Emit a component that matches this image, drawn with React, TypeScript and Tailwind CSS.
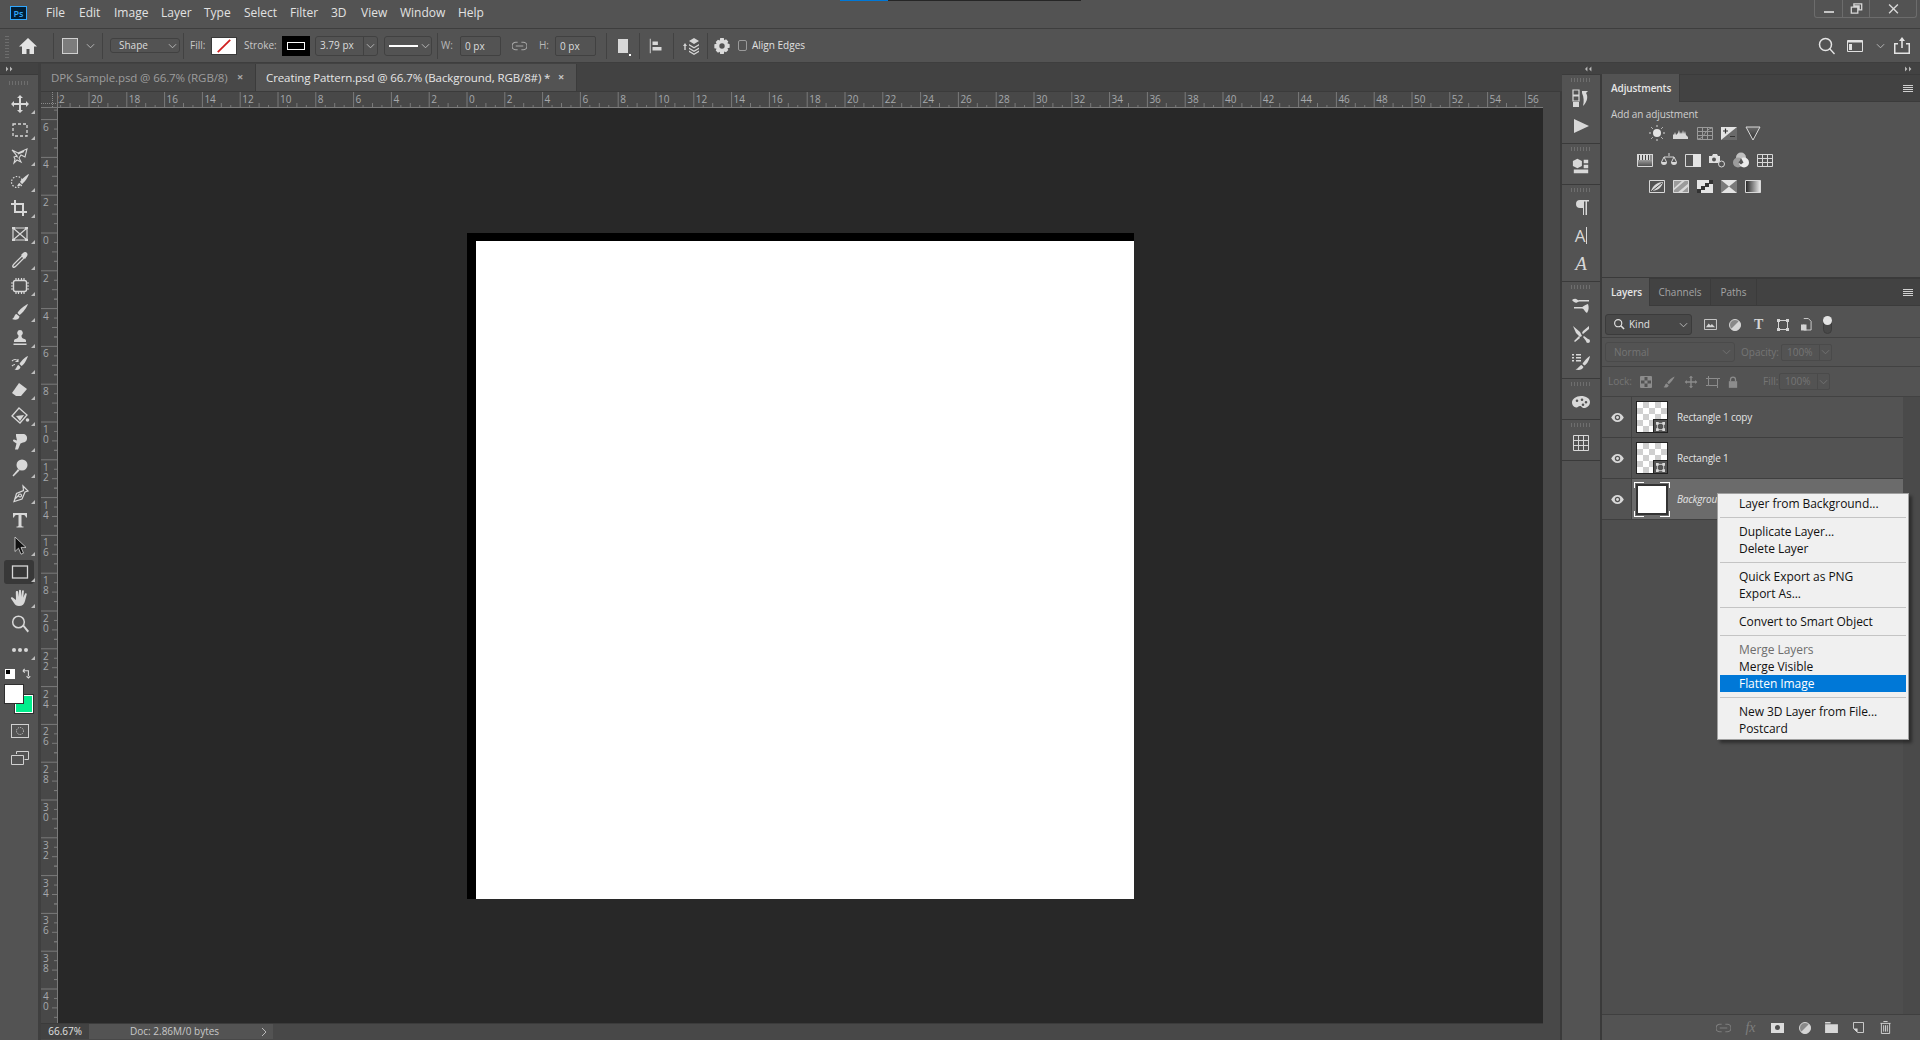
import type { ReactNode } from "react";

const UI_FONT = "font-['Open_Sans','Noto_Sans',sans-serif]";

type IconProps = { size?: number; className?: string; children: ReactNode };

function Ic({ size = 20, className = "text-[#d8d8d8]", children }: IconProps) {
  return (
    <svg viewBox="0 0 20 20" width={size} height={size} fill="currentColor" className={className}>
      {children}
    </svg>
  );
}

const line = { fill: "none", stroke: "currentColor", strokeWidth: 1.4 };

const MENUS = [
  ["File", "w-[33px]"],
  ["Edit", "w-[35px]"],
  ["Image", "w-[47px]"],
  ["Layer", "w-[43px]"],
  ["Type", "w-[40px]"],
  ["Select", "w-[46px]"],
  ["Filter", "w-[41px]"],
  ["3D", "w-[30px]"],
  ["View", "w-[39px]"],
  ["Window", "w-[58px]"],
  ["Help", "w-[40px]"],
];

function MenuBar() {
  return (
    <div className="relative flex h-[29px] shrink-0 items-center border-b border-[#3e3e3e] bg-[#535353] pb-[2px] text-[12px] text-[#e2e2e2]">
      <div className="ml-[10px] flex h-[14px] w-[17px] items-center justify-center border border-[#31a8ff] bg-[#001e36] text-[9px] font-semibold leading-none text-[#31a8ff]">
        Ps
      </div>
      <div className="ml-[19px] flex">
        {MENUS.map(([name, width]) => (
          <span key={name} className={width}>
            {name}
          </span>
        ))}
      </div>
      <div className="absolute left-[840px] top-0 flex h-px w-[241px] bg-[#262626]">
        <div className="h-px w-[48px] bg-[#0078d7]" />
      </div>
      <div className="absolute right-[3px] top-0 flex h-[18px] w-[103px] items-center rounded-b-[3px] border border-t-0 border-[#6c6c6c] text-[#d0d0d0]">
        <div className="flex h-full w-[28px] items-center justify-center border-r border-[#6c6c6c]">
          <div className="mt-[6px] h-[2px] w-[10px] bg-[#c4c4c4]" />
        </div>
        <div className="flex h-full w-[27px] items-center justify-center border-r border-[#6c6c6c]">
          <Ic size={13}>
            <path d="M2 8h10v9H2zM6 3h12v9h-4V6H6z" {...line} strokeWidth={2} />
          </Ic>
        </div>
        <div className="flex flex-1 items-center justify-center">
          <Ic size={13}>
            <path d="M4 3l6 6 6-6 1.500 1.500-6 6 6 6L16 18l-6-6-6 6-1.500-1.500 6-6-6-6z" />
          </Ic>
        </div>
      </div>
    </div>
  );
}

function Sep({ ml }: { ml: string }) {
  return <div className={`h-[26px] w-px bg-[#424242] ${ml}`} />;
}

function Chevron({ className = "" }: { className?: string }) {
  return (
    <svg viewBox="0 0 10 6" width="9" height="6" className={className}>
      <path d="M1 1l4 4 4-4" fill="none" stroke="#c0c0c0" strokeWidth="1" />
    </svg>
  );
}

function OptionsBar() {
  return (
    <div className="flex h-[34px] shrink-0 items-center border-b border-[#3e3e3e] bg-[#535353] text-[10px] text-[#cfcfcf]">
      <div className="ml-[5px] h-[24px] w-[4px] bg-[repeating-linear-gradient(0deg,#6d6d6d_0_1px,transparent_1px_3px)]" />
      <Ic size={20} className="ml-[9px] text-[#e4e4e4]">
        <path d="M10 2L1 10.500h3V18h4.500v-5h3v5H16v-7.500h3z" />
      </Ic>
      <Sep ml="ml-[15px]" />
      <div className="ml-[8px] h-[16px] w-[16px] border border-[#d0d0d0] bg-[#7c7c7c]" />
      <Chevron className="ml-[8px]" />
      <Sep ml="ml-[7px]" />
      <div className="ml-[7px] flex h-[15px] w-[70px] items-center rounded-[3px] border border-[#414141] pl-[8px] text-[#dcdcdc]">
        <span className="flex-1">Shape</span>
        <Chevron className="mr-[2px]" />
      </div>
      <Sep ml="ml-[3px]" />
      <span className="ml-[6px] w-[21px] text-[#c8c8c8]">Fill:</span>
      <div className="relative h-[18px] w-[26px] border border-[#3a3a3a] bg-white">
        <svg viewBox="0 0 26 18" className="absolute inset-0 h-full w-full">
          <path d="M6 16L20 2" stroke="#d02020" strokeWidth="2" />
        </svg>
      </div>
      <span className="ml-[7px] w-[38px] text-[#c8c8c8]">Stroke:</span>
      <div className="flex h-[20px] w-[28px] items-center justify-center bg-black">
        <div className="h-[8px] w-[18px] border border-white" />
      </div>
      <div className="ml-[5px] flex h-[20px] w-[63px] items-center rounded-[3px] border border-[#414141] pl-[4px] text-[#dcdcdc]">
        <span className="w-[43px]">3.79 px</span>
        <div className="flex h-full flex-1 items-center justify-center border-l border-[#414141]">
          <Chevron />
        </div>
      </div>
      <div className="ml-[6px] flex h-[20px] w-[48px] items-center gap-[3px] rounded-[3px] border border-[#414141] pl-[4px]">
        <div className="h-[2px] w-[29px] bg-white" />
        <Chevron />
      </div>
      <Sep ml="ml-[5px]" />
      <span className="ml-[3px] w-[19px] text-[#b8b8b8]">W:</span>
      <div className="h-[20px] w-[41px] rounded-[2px] border border-[#414141] pl-[4px] leading-[18px] text-[#dcdcdc]">0 px</div>
      <svg viewBox="0 0 16 10" width="15" height="10" className="ml-[11px] text-[#a8a8a8]">
        <path d="M6 1H4a4 4 0 000 8h2M10 1h2a4 4 0 010 8h-2M4 5h8" fill="none" stroke="currentColor" strokeWidth="1.200" />
      </svg>
      <span className="ml-[12px] w-[16px] text-[#b8b8b8]">H:</span>
      <div className="h-[20px] w-[41px] rounded-[2px] border border-[#414141] pl-[4px] leading-[18px] text-[#dcdcdc]">0 px</div>
      <Sep ml="ml-[10px]" />
      <div className="relative ml-[11px] h-[14px] w-[10px] bg-[#d8d8d8]">
        <div className="absolute -right-[3px] bottom-[-3px] h-[2px] w-[2px] bg-white" />
      </div>
      <Sep ml="ml-[11px]" />
      <Ic size={18} className="ml-[8px] text-[#d8d8d8]">
        <path d="M2 2h1v16H2zM5 5h6v4H5zM5 11h10v4H5z" />
      </Ic>
      <Sep ml="ml-[7px]" />
      <Ic size={20} className="ml-[7px] text-[#d4d4d4]">
        <path d="M2 10l2-3 2 3H4.700v4H3.300v-4zM13 2l5 3-5 3-5-3zM8 8l5 3 5-3v1.500l-5 3-5-3zM8 11.500l5 3 5-3V13l-5 3-5-3zM8 14.500l5 3 5-3V16l-5 3-5-3z" />
      </Ic>
      <Sep ml="ml-[6px]" />
      <Ic size={18} className="ml-[5px] text-[#dadada]">
        <path fillRule="evenodd" d="M8 1h4l.500 2.500 2-1 2.500 2.500-1 2L18.500 8v4l-2.500.500 1 2-2.500 2.500-2-1L12 19H8l-.500-2.500-2 1L3 15l1-2-2.500-.500V8L4 7.500l-1-2L5.500 3l2 1zM10 7a3 3 0 100 6 3 3 0 000-6z" />
      </Ic>
      <div className="ml-[7px] h-[11px] w-[9px] rounded-[2px] border border-[#9a9a9a]" />
      <span className="ml-[5px] text-[#e0e0e0]">Align Edges</span>
      <div className="ml-auto flex items-center">
        <Ic size={20} className="text-[#e4e4e4]">
          <circle cx="8.500" cy="8.500" r="6" {...line} strokeWidth={1.500} />
          <path d="M13 12l5 5.500-1 1-5-5.500z" />
        </Ic>
        <svg viewBox="0 0 16 12" width="16" height="12" className="ml-[10px]">
          <path d="M.500.500h15v11H.500z" fill="none" stroke="#e0e0e0" />
          <path d="M.500.500h15v2H.500zM2 4h3v6H2z" fill="#e0e0e0" />
        </svg>
        <Chevron className="ml-[13px]" />
        <Ic size={20} className="ml-[7px] mr-[8px] text-[#e4e4e4]">
          <path d="M9.200 12V5H7l3-4 3 4h-2.200v7zM2 7h4v1.500H3.500v8h13v-8H14V7h4v11H2z" />
        </Ic>
      </div>
    </div>
  );
}

const TOOLS: { id: string; icon: ReactNode }[] = [
  { id: "move", icon: <path d="M10 1l3 3h-2v5h5V7l3 3-3 3v-2h-5v5h2l-3 3-3-3h2v-5H4v2l-3-3 3-3v2h5V4H7z" /> },
  { id: "marquee", icon: <rect x="3" y="4" width="14" height="12" fill="none" stroke="currentColor" strokeWidth="1.300" strokeDasharray="3 2" /> },
  { id: "lasso", icon: <path d="M2 4l6 3 9-4-2 8-4-2-2 3 2 4-4-2-3 3 1-4-1-2 3-1zM4.500 6.500l3 5M8 8l6-2.500" {...line} strokeWidth={1.100} /> },
  {
    id: "quick",
    icon: (
      <>
        <circle cx="7" cy="10" r="5.500" fill="none" stroke="currentColor" strokeWidth="1.200" strokeDasharray="1.500 1.500" />
        <path d="M19 2c-3 1-8 6-9 8l2 2c3-2 6-7 7-10zM9.500 11c-1.500.500-1.500 2-2.500 3 1.500.500 3.500 0 4-1.500z" />
      </>
    ),
  },
  { id: "crop", icon: <path d="M1 5h3V2h2v3h8v8h3v2h-3v3h-2v-3H4V7H1zM6 7v6h6V7z" fillRule="evenodd" /> },
  {
    id: "frame",
    icon: (
      <>
        <path d="M3 4h14v12H3zM3 4l14 12M17 4L3 16" {...line} strokeWidth={1.200} />
        <path d="M2 3h3v2H2zM15 3h3v2h-3zM2 15h3v2H2zM15 15h3v2h-3z" />
      </>
    ),
  },
  {
    id: "eyedropper",
    icon: (
      <>
        <path d="M12 6l2 2-8 8c-1 1-2.500 1.500-3 1-.500-.500 0-2 1-3z" {...line} strokeWidth={1.200} />
        <path d="M11 5l1.500-1.500C14 2 16 1.500 17 3s.500 3-1 4.500L15 9z" />
      </>
    ),
  },
  {
    id: "patch",
    icon: (
      <>
        <rect x="3.500" y="4.500" width="13" height="11" rx="2" fill="none" stroke="currentColor" strokeWidth="1.400" />
        <path d="M6 2v2.500M8.500 2v2.500M11.500 2v2.500M14 2v2.500M6 15.500V18M8.500 15.500V18M11.500 15.500V18M14 15.500V18M1 7h2.500M1 10h2.500M1 13h2.500M16.500 7H19M16.500 10H19M16.500 13H19" {...line} strokeWidth={1.200} />
      </>
    ),
  },
  { id: "brush", icon: <path d="M18 2C15 3 9 8 7.500 11l2 2c3-1.500 7.500-8 8.500-11zM6.500 12C4 12.500 5 16 2 17c3 1.500 7 1 7.500-2.500z" /> },
  { id: "stamp", icon: <path d="M10 2a3 3 0 00-1.500 5.500c0 2-.500 3-3 3.500-1 .200-1.500 1-1.500 2v1h12v-1c0-1-.500-1.800-1.500-2-2.500-.500-3-1.500-3-3.500A3 3 0 0010 2zM3.500 15.500h13V17h-13z" /> },
  {
    id: "history",
    icon: (
      <>
        <path d="M18 2c-3 1-7 5-8.500 8l2 2c3-1.500 5.500-7 6.500-10zM8.500 11c-2 .500-1.500 3.500-4 4.500 2.500 1 5.500.500 6-2.500z" />
        <path d="M2 7c2-2 4-2 6 0M8 5v2.500H5.500M2 12c1-1 2-1.500 3-1.500" {...line} strokeWidth={1.100} />
      </>
    ),
  },
  { id: "eraser", icon: <path d="M9 3l8 6-6 7H6l-4-3z" /> },
  {
    id: "bucket",
    icon: (
      <>
        <path d="M9 2l8 7-7 8-8-7z" {...line} strokeWidth={1.300} />
        <path d="M6 10l8-1-4 6z" />
        <circle cx="17.500" cy="14" r="1.800" />
      </>
    ),
  },
  { id: "smudge", icon: <path d="M6 2h7c2.500 0 4.500 2 4 5-.300 2-2 3.500-4 3.500l-2.500 1-2.500 6H5l1.500-6-3-2c-1-.800-.500-2 .500-2l3 1-1-4.500z" /> },
  {
    id: "dodge",
    icon: (
      <>
        <circle cx="12" cy="7" r="5.500" />
        <path d="M8 11L2.500 17.500 3.500 18.500 9.500 12.500z" />
      </>
    ),
  },
  { id: "pen", icon: <path d="M13 2l5 5-3 1-3 7-8 2.500 2.500-8 7-3zM4.500 15.500l4-4M10 10a1.500 1.500 0 10.010 0" {...line} strokeWidth={1.200} /> },
  { id: "type", icon: <path d="M3 3h14v4.500h-1C15.500 5.500 14.500 5 13 5h-1.500v10.500c0 .800.500 1 2 1V17.500h-7v-1c1.500 0 2-.200 2-1V5H7C5.500 5 4.500 5.500 4 7.500H3z" /> },
  {
    id: "direct",
    icon: <path d="M5 1V15.500l3.500-3.300 2.500 6 2.500-1-2.500-5.800H16z" className="fill-[#111111] stroke-[#d8d8d8]" strokeWidth="0.800" />,
  },
  { id: "rect", icon: <rect x="2.500" y="4" width="15" height="12" fill="none" stroke="currentColor" strokeWidth="1.300" /> },
  { id: "hand", icon: <path d="M7 3c.800 0 1 .500 1.200 1L9 9V2.500c0-1 1.800-1 2 0V9l1-6c.200-1 2-.800 1.900.300L13.200 9.800l1.800-4c.400-.900 2-.300 1.700.700L15 13c-.700 3-2.500 5-6 5-2.500 0-4-1-5-3l-3-4.500c-.500-.900.700-1.900 1.700-1L6 12 5.800 4.200C5.800 3.400 6.300 3 7 3z" /> },
  {
    id: "zoom",
    icon: (
      <>
        <circle cx="8.500" cy="8" r="5.800" fill="none" stroke="currentColor" strokeWidth="1.500" />
        <path d="M12.500 12l1.500-1 5 6-1.500 1.500z" />
      </>
    ),
  },
  {
    id: "more",
    icon: (
      <>
        <circle cx="4" cy="10" r="2" />
        <circle cx="10" cy="10" r="2" />
        <circle cx="16" cy="10" r="2" />
      </>
    ),
  },
];

function Grip({ w = "w-[20px]" }: { w?: string }) {
  return <div className={`h-[4px] ${w} bg-[repeating-linear-gradient(90deg,#6e6e6e_0_1px,transparent_1px_3px)]`} />;
}

function LeftToolbar() {
  return (
    <div className="flex w-[41px] shrink-0 flex-col border-r-[3px] border-[#3f3f3f] bg-[#535353]">
      <div className="flex h-[12px] items-center border-b border-[#3b3b3b] bg-[#424242] pl-[6px]">
        <svg viewBox="0 0 10 6" width="8" height="6">
          <path d="M0 0l3 3-3 3zM5 0l3 3-3 3z" fill="#b8b8b8" />
        </svg>
      </div>
      <div className="flex h-[16px] items-center justify-center">
        <Grip />
      </div>
      {TOOLS.map((tool) => (
        <div key={tool.id} className="relative flex h-[26px] items-center justify-center pl-[2px]">
          {tool.id === "rect" ? <div className="absolute inset-x-[4px] inset-y-[1px] rounded-[3px] bg-[#383838]" /> : null}
          <div className="relative">
            <Ic>{tool.icon}</Ic>
          </div>
          {tool.id === "type" || tool.id === "zoom" ? null : (
            <div className="absolute bottom-[3px] right-[3px] h-0 w-0 border-b-[4px] border-l-[4px] border-b-[#bdbdbd] border-l-transparent" />
          )}
        </div>
      ))}
      <div className="mt-[5px] flex items-center pl-[5px]">
        <div className="relative h-[10px] w-[10px] bg-white">
          <div className="absolute left-0 top-0 h-[6px] w-[6px] border border-white bg-black" />
        </div>
        <svg viewBox="0 0 12 12" width="11" height="11" className="ml-[7px]">
          <path d="M1 3h6v6M1 3l2-2M1 3l2 2M5 9l2 2 2-2" fill="none" stroke="#d8d8d8" strokeWidth="1.200" />
        </svg>
      </div>
      <div className="relative ml-[4px] mt-[5px] h-[30px] w-[30px]">
        <div className="absolute bottom-0 right-0 h-[20px] w-[20px] border border-[#2f2f2f] bg-[#00ee8c] outline outline-1 -outline-offset-2 outline-white" />
        <div className="absolute left-0 top-0 h-[20px] w-[20px] border border-[#2f2f2f] bg-white" />
      </div>
      <div className="mt-[10px] flex justify-center pl-[2px]">
        <svg viewBox="0 0 18 14" width="18" height="14">
          <rect x=".500" y=".500" width="17" height="13" fill="none" stroke="#d0d0d0" />
          <circle cx="9" cy="7" r="3.500" fill="none" stroke="#d0d0d0" strokeDasharray="1 1" />
        </svg>
      </div>
      <div className="mt-[13px] flex justify-center pl-[2px]">
        <svg viewBox="0 0 18 14" width="18" height="14">
          <path d="M5.500 3V.500h12v8h-4M.500 4.500h12v9H.500z" fill="none" stroke="#d0d0d0" />
        </svg>
      </div>
    </div>
  );
}

function DocTabs() {
  return (
    <div className="flex h-[29px] shrink-0 border-b border-[#3b3b3b] bg-[#424242] pt-[1px] text-[11.5px] tracking-[-0.1px]">
      <div className="flex w-[215px] items-center border-r border-[#3b3b3b] bg-[#484848] pl-[10px] text-[#9d9d9d]">
        <span className="w-[186px] whitespace-nowrap">DPK Sample.psd @ 66.7% (RGB/8)</span>
        <span className="text-[11px] font-bold text-[#a8a8a8]">×</span>
      </div>
      <div className="flex w-[321px] items-center border-r border-[#3b3b3b] bg-[#535353] pl-[10px] text-[#e6e6e6]">
        <span className="w-[292px] whitespace-nowrap">Creating Pattern.psd @ 66.7% (Background, RGB/8#) *</span>
        <span className="text-[11px] font-bold text-[#c4c4c4]">×</span>
      </div>
    </div>
  );
}

const STEP = 18.9;

function HRuler() {
  const units = Array.from({ length: 41 }, (_, i) => -22 + i * 2);
  return (
    <svg width="1485" height="15" className="block">
      {units.map((u) => {
        const x = 409 + u * STEP;
        return (
          <g key={u}>
            <line x1={x} x2={x} y1="0" y2="15" stroke="#7a7a7a" />
            {[0.25, 0.5, 0.75].map((t) => (
              <line key={t} x1={x + t * 2 * STEP} x2={x + t * 2 * STEP} y1={t === 0.5 ? 11 : 13} y2="15" stroke="#7a7a7a" />
            ))}
            <text x={x + 2} y="11" fontSize="10" fill="#a6a8ac" fontFamily="'Open Sans', sans-serif">
              {Math.abs(u)}
            </text>
          </g>
        );
      })}
    </svg>
  );
}

function VRuler() {
  const units = Array.from({ length: 24 }, (_, i) => -6 + i * 2);
  return (
    <svg width="16" height="915" className="block">
      {units.map((u) => {
        const y = 125 + u * STEP;
        return (
          <g key={u}>
            <line x1="0" x2="16" y1={y} y2={y} stroke="#7a7a7a" />
            {[-0.25, 0.25, 0.5, 0.75].map((t) => (
              <line key={t} y1={y + t * 2 * STEP} y2={y + t * 2 * STEP} x1={t === 0.5 ? 11 : 13} x2="16" stroke="#7a7a7a" />
            ))}
            {String(Math.abs(u))
              .split("")
              .map((digit, i) => (
                <text key={i} x="2" y={y + 11 + i * 10} fontSize="10" fill="#a6a8ac" fontFamily="'Open Sans', sans-serif">
                  {digit}
                </text>
              ))}
          </g>
        );
      })}
    </svg>
  );
}

function DocArea() {
  return (
    <div className="flex w-[1521px] shrink-0 flex-col">
      <DocTabs />
      <div className="flex flex-1">
        <div className="flex w-[1502px] flex-col">
          <div className="flex h-[16px] border-b border-[#7a7a7a] bg-[#484848]">
            <div className="w-[17px] border-r border-[#7a7a7a]">
              <svg width="16" height="15" className="block">
                <path d="M0 11.500h16M11.500 0v15" fill="none" stroke="#8a8a8a" strokeDasharray="1 1" />
              </svg>
            </div>
            <HRuler />
          </div>
          <div className="flex h-[915px]">
            <div className="w-[17px] overflow-hidden border-r border-[#7a7a7a] bg-[#484848]">
              <VRuler />
            </div>
            <div className="flex-1 bg-[#282828] pl-[409px] pt-[125px]">
              <div className="h-[666px] w-[667px] bg-black pl-[9px] pt-[8px]">
                <div className="h-[658px] w-[658px] bg-white" />
              </div>
            </div>
          </div>
          <div className="flex h-[17px] border-t border-[#3b3b3b] bg-[#484848] pb-[1px] text-[10px]">
            <div className="flex w-[48px] items-center justify-end bg-[#424242] pr-[7px] text-[#e0e0e0]">66.67%</div>
            <div className="flex w-[184px] items-center bg-[#535353] pl-[41px] text-[#c8c8c8]">
              <span className="flex-1">Doc: 2.86M/0 bytes</span>
              <svg viewBox="0 0 6 10" width="6" height="10" className="mr-[6px]">
                <path d="M1 1l4 4-4 4" fill="none" stroke="#b8b8b8" />
              </svg>
            </div>
          </div>
        </div>
        <div className="flex-1 border-r-2 border-[#3a3a3a] bg-[#484848]" />
      </div>
    </div>
  );
}

const DOCK_ICON = "flex h-[28px] items-center justify-center";

function DockGroup({ children, h, gap = "mt-[3px]" }: { children: ReactNode; h: string; gap?: string }) {
  return (
    <div className={`flex ${h} flex-col items-center border-b border-[#3a3a3a] pt-[3px]`}>
      <Grip />
      <div className={`${gap} flex w-full flex-col`}>{children}</div>
    </div>
  );
}

function GridIcon({ size = 16 }: { size?: number }) {
  return (
    <svg viewBox="0 0 16 16" width={size} height={size}>
      <path d="M.500.500h15v15H.500zM5.500.500v15M10.500.500v15M.500 5.500h15M.500 10.500h15" fill="none" stroke="#d8d8d8" />
    </svg>
  );
}

function IconStrip() {
  return (
    <div className="w-[40px] shrink-0 border-r-2 border-[#3a3a3a] bg-[#535353]">
      <DockGroup h="h-[69px]" gap="mt-[2px]">
        <div className={DOCK_ICON}>
          <Ic>
            <path d="M2 2h6v5H2zM2 8h6v5H2z" {...line} strokeWidth={1.200} />
            <path d="M2 14h6v5H2zM11 3h6l-2 2c2 3 2 8-3 13 1-4 1-9-1-13z" />
          </Ic>
        </div>
        <div className={DOCK_ICON}>
          <Ic>
            <path d="M3 3l15 7-15 7z" />
          </Ic>
        </div>
      </DockGroup>
      <DockGroup h="h-[41px]" gap="mt-[2px]">
        <div className="flex h-[26px] items-center justify-center">
          <Ic size={18}>
            <path d="M6 2l5 2.500V10l-5 2.500L1 10V4.500zM13 3h5v4h-5zM13 8.500h5v4h-5zM2 14h16v4H2z" />
          </Ic>
        </div>
      </DockGroup>
      <DockGroup h="h-[97px]" gap="mt-[1px]">
        <div className={DOCK_ICON}>
          <Ic>
            <path d="M9 3h9v1.500h-2V18h-1.500V4.500h-1.500V18H12v-7H9a4 4 0 010-8z" />
          </Ic>
        </div>
        <div className={DOCK_ICON}>
          <span className="flex items-center text-[17px] leading-none text-[#d8d8d8]">
            A<span className="ml-[1px] h-[17px] w-px bg-[#d8d8d8]" />
          </span>
        </div>
        <div className={DOCK_ICON}>
          <span className="font-['Liberation_Serif',serif] text-[19px] italic leading-none text-[#d8d8d8]">A</span>
        </div>
      </DockGroup>
      <DockGroup h="h-[97px]">
        <div className={DOCK_ICON}>
          <Ic>
            <path d="M1 4c2-1.500 4-1.500 5-.500 1 1 2 .500 3 .500h9v1.500H9c-1 0-2 0-3 1-1.500.500-3 0-5-2.500zM3 11h8c1 0 2-2 6-3 1 3 1 6-1 9-2-1-3-4.500-5-4.500H3z" />
          </Ic>
        </div>
        <div className={DOCK_ICON}>
          <Ic>
            <path d="M2 2l7 6 2 4-2 1-4-4zM18 2l-6 5-1 2 1 1 6-5zM8 12l-5 5 1 1 5-4zM13 12l4 3a2 2 0 11-2 2l-3-4z" />
          </Ic>
        </div>
        <div className={DOCK_ICON}>
          <Ic>
            <path d="M1 2h2v1.500H1zM5 2h5v1.500H5zM1 5h2v1.500H1zM5 5h5v1.500H5zM1 8h2v1.500H1zM5 8h5v1.500H5zM19 4c-2 1-6 5-7.500 8l2 1.500c3-1.500 5-6.500 5.500-9.500zM10.500 13c-2 .500-3 3.500-6 4.500 3 1 7 .500 8-2.500z" />
          </Ic>
        </div>
      </DockGroup>
      <DockGroup h="h-[41px]">
        <div className="flex h-[26px] items-center justify-center">
          <Ic>
            <path
              fillRule="evenodd"
              d="M10 4c5 0 9 2.500 9 6s-3 6-6 6c-2.500 0-2-2-4-2s-2 2-4 1.500C2 15 1 12.500 1 10.500 1 7 5 4 10 4zM6 7.500a1.300 1.300 0 100 2.600 1.300 1.300 0 000-2.600zM11 6.500a1.300 1.300 0 100 2.600 1.300 1.300 0 000-2.600zM15 9a1.300 1.300 0 100 2.600A1.300 1.300 0 0015 9zM12 11.500a1.300 1.300 0 100 2.600 1.300 1.300 0 000-2.600z"
            />
          </Ic>
        </div>
      </DockGroup>
      <DockGroup h="h-[41px]">
        <div className="flex h-[26px] items-center justify-center">
          <GridIcon />
        </div>
      </DockGroup>
    </div>
  );
}

function Hamburger() {
  return (
    <div className="ml-auto mr-[7px] flex w-[10px] flex-col gap-[1px]">
      <div className="h-px bg-[#d0d0d0]" />
      <div className="h-px bg-[#d0d0d0]" />
      <div className="h-px bg-[#d0d0d0]" />
      <div className="h-px bg-[#d0d0d0]" />
    </div>
  );
}

const adj = (children: ReactNode) => (
  <svg viewBox="0 0 16 16" width="16" height="16">
    {children}
  </svg>
);

const stk = { fill: "none", stroke: "#d8d8d8", strokeWidth: 1 };

const ADJ_ROWS: ReactNode[][] = [
  [
    adj(
      <>
        <circle cx="8" cy="8" r="4" fill="#e4e4e4" />
        <path d="M8 0v2M8 14v2M0 8h2M14 8h2M2.300 2.300l1.400 1.400M12.300 12.300l1.400 1.400M13.700 2.300l-1.400 1.400M3.700 12.300l-1.400 1.400" {...stk} />
      </>,
    ),
    adj(<path d="M0 14V9l1 1 1-3 1 3 2-2 1-3 1 4 1-2 1 2 1-4 1 4 1-3 1 4 2 2v2z" fill="#d8d8d8" />),
    adj(<path d="M.500 2.500h15v12H.500zM5.500 2.500v12M10.500 2.500v12M.500 6.500h15M.500 10.500h15M1 14c6 0 7-10 14-11" {...stk} stroke="#9a9a9a" />),
    adj(
      <>
        <path d="M0 2h16v13H0z" fill="#e4e4e4" />
        <path d="M0 15L16 2v13z" fill="#6a6a6a" />
        <path d="M2 6h5M4.500 3.500v5M9 11.500h5" stroke="#333" strokeWidth="1.200" />
      </>,
    ),
    adj(
      <>
        <defs>
          <linearGradient id="vib" x1="0" y1="0" x2="0" y2="1">
            <stop offset="0" stopColor="#6a6a6a" />
            <stop offset="1" stopColor="#2e2e2e" />
          </linearGradient>
        </defs>
        <path d="M1 2h14L8 15z" fill="url(#vib)" stroke="#d8d8d8" />
      </>,
    ),
  ],
  [
    adj(
      <>
        <defs>
          <linearGradient id="hsl" x1="0" y1="0" x2="0" y2="1">
            <stop offset="0" stopColor="#e8e8e8" />
            <stop offset="1" stopColor="#444" />
          </linearGradient>
        </defs>
        <path d="M0 2h16v13H0z" fill="url(#hsl)" />
        <path d="M0 2h16v6H0z" fill="#d8d8d8" />
        <path d="M2.500 2v6M5.500 2v6M8.500 2v6M11.500 2v6M14 2v6" stroke="#444" />
        <path d="M.500 2.500h15v12H.500z" {...stk} />
      </>,
    ),
    adj(
      <>
        <path d="M8 1v3M3 5h10M3 5L.500 10M3 5l2.500 5M13 5l-2.500 5M13 5l2.500 5" {...stk} />
        <path d="M0 10h6a3 3 0 01-6 0zM10 10h6a3 3 0 01-6 0z" fill="#d8d8d8" />
      </>,
    ),
    adj(
      <>
        <path d="M.500 2.500h15v12H.500z" {...stk} />
        <path d="M8 2h8v13H8z" fill="#e4e4e4" />
      </>,
    ),
    adj(
      <>
        <path d="M0 4h3l1-2h4l1 2h2v7H0z" fill="#e0e0e0" />
        <circle cx="5" cy="7.500" r="2" fill="#555" />
        <circle cx="12.500" cy="12" r="3" fill="#535353" stroke="#d8d8d8" />
      </>,
    ),
    adj(
      <>
        <circle cx="8" cy="5.500" r="5" fill="#c0c0c0" />
        <circle cx="5" cy="10.500" r="5" fill="#9c9c9c" />
        <circle cx="11" cy="10.500" r="5" fill="#ececec" />
        <path d="M8 6l2.500 4.500L8 12.500l-2.500-2z" fill="#555" />
      </>,
    ),
    adj(<path d="M.500 2.500h15v12H.500zM5.500 2.500v12M10.500 2.500v12M.500 6.500h15M.500 10.500h15" {...stk} />),
  ],
  [
    adj(
      <>
        <path d="M.500 2.500h15v12H.500z" {...stk} />
        <path d="M2 13c2-6 7-9 12-9-1 5-5 9-12 9z" fill="#d8d8d8" />
        <path d="M3 13L13 5" stroke="#444" />
      </>,
    ),
    adj(
      <>
        <path d="M0 2h16v13H0z" fill="#9a9a9a" />
        <path d="M0 11L10 2h3L0 13zM4 15L16 5v3L8 15z" fill="#d8d8d8" />
        <path d="M.500 2.500h15v12H.500z" {...stk} />
      </>,
    ),
    adj(
      <>
        <path d="M0 2h16v13H0z" fill="#e4e4e4" />
        <path d="M0 11h4V8h4V5h4V2h4v4h-4v3H8v3H4v3H0z" fill="#333" />
      </>,
    ),
    adj(
      <>
        <path d="M0 2h16v13H0z" fill="#e4e4e4" />
        <path d="M0 2l8 6.500L16 2v13L8 8.500 0 15z" fill="#7a7a7a" />
      </>,
    ),
    adj(
      <>
        <defs>
          <linearGradient id="gmap" x1="0" y1="0" x2="1" y2="0">
            <stop offset="0" stopColor="#222" />
            <stop offset="1" stopColor="#eee" />
          </linearGradient>
        </defs>
        <path d="M.500 2.500h15v12H.500z" fill="url(#gmap)" stroke="#d8d8d8" />
      </>,
    ),
  ],
];

function AdjustmentsPanel() {
  return (
    <div className="flex h-[204px] shrink-0 flex-col border-b-2 border-[#3a3a3a] bg-[#535353]">
      <div className="flex h-[27px] shrink-0 items-center border-b border-[#3b3b3b] bg-[#424242] text-[10px]">
        <div className="flex h-[28px] w-[78px] items-center border-r border-[#3b3b3b] bg-[#535353] pl-[9px] font-semibold tracking-[-0.1px] text-[#e6e6e6]">
          Adjustments
        </div>
        <Hamburger />
      </div>
      <div className="pl-[9px] pt-[5px] text-[10px] leading-[14px] tracking-[-0.1px] text-[#cfcfcf]">Add an adjustment</div>
      <div className="-mt-[1px] flex w-[206px] flex-col items-center">
        {ADJ_ROWS.map((row, r) => (
          <div key={r} className="flex h-[26.5px] items-center gap-[8px]">
            {row.map((icon, i) => (
              <div key={i} className="h-[16px] w-[16px]">
                {icon}
              </div>
            ))}
          </div>
        ))}
      </div>
    </div>
  );
}

const CHECKER =
  "bg-white bg-[repeating-conic-gradient(#cfcfcf_0%_25%,#ffffff_0%_50%)] bg-[length:12px_12px]";

function Eye() {
  return (
    <svg viewBox="0 0 14 10" width="13" height="9">
      <path fillRule="evenodd" d="M7 0c3 0 5.500 2 7 5-1.500 3-4 5-7 5S1.500 8 0 5c1.500-3 4-5 7-5zm0 2a3 3 0 100 6 3 3 0 000-6z" fill="#d8d8d8" />
      <circle cx="7" cy="5" r="1.600" fill="#d8d8d8" />
    </svg>
  );
}

function LayerRow({ name, selected }: { name: string; selected?: boolean }) {
  return (
    <div className="flex h-[41px] border-b border-[#3f3f3f]">
      <div className="flex w-[30px] items-center justify-center border-r border-[#424242] pl-[1px]">
        <Eye />
      </div>
      <div className={`flex flex-1 items-center ${selected ? "bg-[#6b6b6b]" : ""}`}>
        {selected ? (
          <div className="relative ml-[2px] h-[35px] w-[36px] p-[2px]">
            <div className="h-full w-full border-[2px] border-[#333] bg-white" />
            <div className="absolute left-0 top-0 h-[6px] w-[10px] border-l border-t border-white" />
            <div className="absolute right-0 top-0 h-[6px] w-[10px] border-r border-t border-white" />
            <div className="absolute bottom-0 left-0 h-[6px] w-[10px] border-b border-l border-white" />
            <div className="absolute bottom-0 right-0 h-[6px] w-[10px] border-b border-r border-white" />
          </div>
        ) : (
          <div className={`relative ml-[4px] h-[32px] w-[32px] border border-[#222] ${CHECKER}`}>
            <div className="absolute bottom-0 right-0 flex h-[13px] w-[14px] items-center justify-center border-l border-t border-[#222] bg-[#535353]">
              <svg viewBox="0 0 10 10" width="9" height="9">
                <path d="M1.500 1.500h7v7h-7z" fill="none" stroke="#d8d8d8" />
                <path d="M0 0h3v3H0zM7 0h3v3H7zM0 7h3v3H0zM7 7h3v3H7z" fill="#d8d8d8" />
              </svg>
            </div>
          </div>
        )}
        <span className={`whitespace-nowrap text-[10px] tracking-[-0.2px] text-[#e4e4e4] ${selected ? "ml-[7px] italic" : "ml-[9px]"}`}>{name}</span>
      </div>
    </div>
  );
}

function FooterSlot({ children }: { children: ReactNode }) {
  return <div className="flex h-full w-[27px] items-center justify-center">{children}</div>;
}

function LayersPanel() {
  return (
    <div className="flex flex-1 flex-col bg-[#535353] text-[10px]">
      <div className="flex h-[27px] shrink-0 items-center border-b border-[#3b3b3b] bg-[#424242]">
        <div className="flex h-[28px] w-[48px] items-center border-r border-[#3b3b3b] bg-[#535353] pl-[9px] font-semibold tracking-[-0.1px] text-[#e6e6e6]">Layers</div>
        <div className="flex h-full w-[61px] items-center justify-center border-r border-[#3b3b3b] text-[#a4a4a4]">Channels</div>
        <div className="flex h-full w-[46px] items-center justify-center border-r border-[#3b3b3b] text-[#a4a4a4]">Paths</div>
        <Hamburger />
      </div>
      <div className="flex h-[32px] items-center border-b border-[#424242] pl-[3px] pt-[6px]">
        <div className="flex h-[21px] w-[87px] items-center rounded-[3px] border border-[#3b3b3b] bg-[#484848] pl-[7px] text-[#e0e0e0]">
          <Ic size={13} className="text-[#e0e0e0]">
            <circle cx="8" cy="8" r="5.500" {...line} strokeWidth={1.800} />
            <path d="M12 12l5 5" {...line} strokeWidth={2.400} />
          </Ic>
          <span className="ml-[3px] flex-1">Kind</span>
          <Chevron className="mr-[3px]" />
        </div>
        <svg viewBox="0 0 14 12" width="13" height="11" className="ml-[12px]">
          <path d="M.500.500h13v11H.500z" fill="none" stroke="#d4d4d4" />
          <path d="M2 9l3-4 2 2 1.500-1.500L12 9z" fill="#d4d4d4" />
        </svg>
        <svg viewBox="0 0 12 12" width="12" height="12" className="ml-[12px]">
          <circle cx="6" cy="6" r="5.500" fill="#888" stroke="#d4d4d4" />
          <path d="M10 2A5.500 5.500 0 012 10z" fill="#d4d4d4" />
        </svg>
        <span className="ml-[13px] font-['Liberation_Serif',serif] text-[14px] font-bold leading-none text-[#d4d4d4]">T</span>
        <svg viewBox="0 0 12 12" width="12" height="12" className="ml-[14px]">
          <path d="M1.500 1.500h9v9h-9z" fill="none" stroke="#d4d4d4" />
          <path d="M0 0h3v3H0zM9 0h3v3H9zM0 9h3v3H0zM9 9h3v3H9z" fill="#d4d4d4" />
        </svg>
        <svg viewBox="0 0 12 14" width="11" height="13" className="ml-[12px]">
          <path d="M3 .500h5l3 3V13H3V7" fill="none" stroke="#d4d4d4" />
          <path d="M0 7h6v6.500H0z" fill="#d4d4d4" />
        </svg>
        <div className="relative ml-[11px] h-[18px] w-[9px] rounded-full border border-[#3d3d3d] bg-[#484848]">
          <div className="absolute -left-px -top-px h-[9px] w-[9px] rounded-full bg-[#e4e4e4]" />
        </div>
      </div>
      <div className="flex h-[29px] items-center border-b border-[#424242] pl-[3px] text-[#757575]">
        <div className="flex h-[20px] w-[130px] items-center rounded-[3px] border border-[#4a4a4a] pl-[8px]">
          <span className="flex-1">Normal</span>
          <Chevron className="mr-[3px] opacity-30" />
        </div>
        <span className="ml-[6px] w-[40px]">Opacity:</span>
        <div className="flex h-[17px] w-[51px] items-center rounded-[2px] border border-[#4a4a4a] pl-[5px]">
          <span className="w-[32px]">100%</span>
          <div className="flex h-full flex-1 items-center justify-center border-l border-[#4a4a4a]">
            <Chevron className="opacity-30" />
          </div>
        </div>
      </div>
      <div className="flex h-[30px] items-center border-b border-[#424242] pl-[6px] text-[#757575]">
        <span className="w-[32px]">Lock:</span>
        <svg viewBox="0 0 12 12" width="12" height="12">
          <path d="M.500.500h11v11H.500z" fill="none" stroke="#8c8c8c" />
          <path d="M1 1h3.500v3.500H1zM7.500 1H11v3.500H7.500zM4.500 4.500H7.500v3H4.500zM1 7.500h3.500V11H1zM7.500 7.500H11V11H7.500z" fill="#8c8c8c" />
        </svg>
        <Ic size={14} className="ml-[10px] text-[#8c8c8c]">
          <path d="M18 2C15 3 9 8 7.500 11l2 2c3-1.500 7.500-8 8.500-11zM6.500 12C4 12.500 5 16 2 17c3 1.500 7 1 7.500-2.500z" />
        </Ic>
        <Ic size={14} className="ml-[8px] text-[#8c8c8c]">
          <path d="M10 1l3 3h-2v5h5V7l3 3-3 3v-2h-5v5h2l-3 3-3-3h2v-5H4v2l-3-3 3-3v2h5V4H7z" />
        </Ic>
        <svg viewBox="0 0 14 12" width="14" height="12" className="ml-[8px]">
          <path d="M2.500 2.500h9v7h-9zM2.500 0v2.500H0M14 2.500h-2.500M11.500 9.500V12M0 9.500h2.500" fill="none" stroke="#8c8c8c" />
        </svg>
        <svg viewBox="0 0 12 14" width="10" height="12" className="ml-[8px]">
          <path d="M3 6V4a3 3 0 016 0v2" fill="none" stroke="#8c8c8c" strokeWidth="1.500" />
          <path d="M1 6h10v8H1z" fill="#8c8c8c" />
        </svg>
        <span className="ml-[25px] w-[16px]">Fill:</span>
        <div className="flex h-[17px] w-[51px] items-center rounded-[2px] border border-[#4a4a4a] pl-[5px]">
          <span className="w-[32px]">100%</span>
          <div className="flex h-full flex-1 items-center justify-center border-l border-[#4a4a4a]">
            <Chevron className="opacity-30" />
          </div>
        </div>
      </div>
      <div className="flex min-h-0 flex-1">
        <div className="flex-1 bg-[#4e4e4e]">
          <div className="bg-[#535353]">
            <LayerRow name="Rectangle 1 copy" />
            <LayerRow name="Rectangle 1" />
            <LayerRow name="Background" selected />
          </div>
        </div>
        <div className="w-[17px] bg-[#4a4a4a]" />
      </div>
      <div className="flex h-[26px] shrink-0 items-center justify-end border-t border-[#3f3f3f] pr-[21px]">
        <FooterSlot>
          <svg viewBox="0 0 16 10" width="15" height="10">
            <path d="M6 1H4a4 4 0 000 8h2M10 1h2a4 4 0 010 8h-2M4 5h8" fill="none" stroke="#7e7e7e" strokeWidth="1.200" />
          </svg>
        </FooterSlot>
        <FooterSlot>
          <span className="font-['Liberation_Serif',serif] text-[14px] italic leading-none text-[#7e7e7e]">fx</span>
        </FooterSlot>
        <FooterSlot>
          <div className="flex h-[10px] w-[13px] items-center justify-center bg-[#dcdcdc]">
            <div className="h-[5px] w-[5px] rounded-full bg-[#4e4e4e]" />
          </div>
        </FooterSlot>
        <FooterSlot>
          <svg viewBox="0 0 12 12" width="12" height="12">
            <circle cx="6" cy="6" r="5.500" fill="#888" stroke="#d4d4d4" />
            <path d="M10 2A5.500 5.500 0 012 10z" fill="#d4d4d4" />
          </svg>
        </FooterSlot>
        <FooterSlot>
          <svg viewBox="0 0 14 12" width="13" height="11">
            <path d="M0 0h6v1.500H0zM0 2.500h14V12H0z" fill="#d8d8d8" />
          </svg>
        </FooterSlot>
        <FooterSlot>
          <svg viewBox="0 0 12 12" width="11" height="11">
            <path d="M1 .500h10.500v11H5L.500 7V.500z" fill="none" stroke="#d8d8d8" />
            <path d="M.500 7H5v4.500z" fill="#d8d8d8" />
          </svg>
        </FooterSlot>
        <FooterSlot>
          <svg viewBox="0 0 12 14" width="11" height="13">
            <path d="M4 1V.500h4V1M.500 2.500h11M1.500 2.500v11h9v-11M4 4.500v7M6 4.500v7M8 4.500v7" fill="none" stroke="#d8d8d8" />
          </svg>
        </FooterSlot>
      </div>
    </div>
  );
}

const MENU_GROUPS: { label: string; disabled?: boolean; active?: boolean }[][] = [
  [{ label: "Layer from Background..." }],
  [{ label: "Duplicate Layer..." }, { label: "Delete Layer" }],
  [{ label: "Quick Export as PNG" }, { label: "Export As..." }],
  [{ label: "Convert to Smart Object" }],
  [{ label: "Merge Layers", disabled: true }, { label: "Merge Visible" }, { label: "Flatten Image", active: true }],
  [{ label: "New 3D Layer from File..." }, { label: "Postcard" }],
];

function ContextMenu() {
  return (
    <div className="absolute left-[1717px] top-[493px] z-10 w-[192px] border border-[#a0a0a0] bg-[#f0f0f0] p-[2px] pt-[1px] text-[12px] leading-[17px] tracking-[-0.05px] text-[#111] shadow-[3px_3px_3px_rgba(0,0,0,0.4)]">
      {MENU_GROUPS.map((group, g) => (
        <div key={g}>
          {g > 0 ? <div className="my-[5px] h-px bg-[#c4c4c4]" /> : null}
          {group.map((item) => (
            <div
              key={item.label}
              className={`h-[17px] whitespace-nowrap pl-[19px] ${item.active ? "bg-[#0078d7] text-white" : ""} ${item.disabled ? "text-[#6d6d6d]" : ""}`}
            >
              {item.label}
            </div>
          ))}
        </div>
      ))}
    </div>
  );
}

function RightDock() {
  return (
    <div className="flex min-w-0 flex-1 flex-col">
      <div className="flex h-[12px] shrink-0 items-center justify-between border-b border-[#3b3b3b] bg-[#424242] pl-[23px] pr-[7px]">
        <svg viewBox="0 0 10 6" width="8" height="6">
          <path d="M3 0L0 3l3 3zM8 0L5 3l3 3z" fill="#b8b8b8" />
        </svg>
        <svg viewBox="0 0 10 6" width="8" height="6">
          <path d="M0 0l3 3-3 3zM5 0l3 3-3 3z" fill="#b8b8b8" />
        </svg>
      </div>
      <div className="flex min-h-0 flex-1">
        <IconStrip />
        <div className="flex min-w-0 flex-1 flex-col">
          <AdjustmentsPanel />
          <LayersPanel />
        </div>
      </div>
    </div>
  );
}

export default function App() {
  return (
    <div className={`relative flex h-[1040px] w-[1920px] flex-col overflow-hidden bg-[#535353] ${UI_FONT}`}>
      <MenuBar />
      <OptionsBar />
      <div className="flex min-h-0 flex-1">
        <LeftToolbar />
        <DocArea />
        <RightDock />
      </div>
      <ContextMenu />
    </div>
  );
}
